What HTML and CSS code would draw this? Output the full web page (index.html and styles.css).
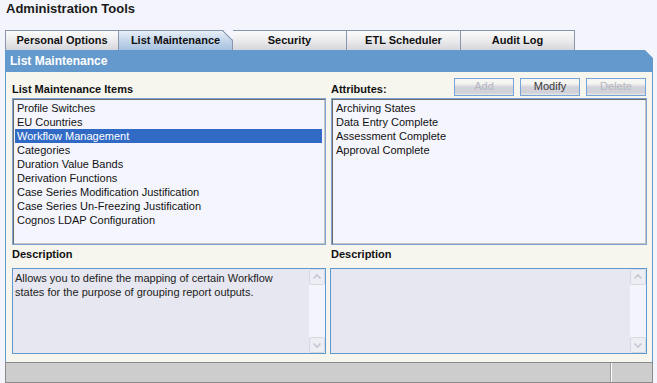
FILE: index.html
```html
<!DOCTYPE html>
<html>
<head>
<meta charset="utf-8">
<title>Administration Tools</title>
<link rel="stylesheet" href="styles.css">
</head>
<body>
<div class="page">
  <h1 class="title">Administration Tools</h1>
  <div class="tabs">
    <div class="tab">Personal Options</div>
    <div class="tab active">List Maintenance</div>
    <div class="tab">Security</div>
    <div class="tab">ETL Scheduler</div>
    <div class="tab">Audit Log</div>
  </div>
  <div class="header">List Maintenance</div>
  <div class="panel">
    <div class="label-row"><span class="label">List Maintenance Items</span></div>
    <div class="label-row">
      <span class="label">Attributes:</span>
      <div class="buttons">
        <div class="btn disabled">Add</div>
        <div class="btn">Modify</div>
        <div class="btn disabled">Delete</div>
      </div>
    </div>
    <div class="listbox">
      <div class="item">Profile Switches</div>
      <div class="item">EU Countries</div>
      <div class="item sel">Workflow Management</div>
      <div class="item">Categories</div>
      <div class="item">Duration Value Bands</div>
      <div class="item">Derivation Functions</div>
      <div class="item">Case Series Modification Justification</div>
      <div class="item">Case Series Un-Freezing Justification</div>
      <div class="item">Cognos LDAP Configuration</div>
    </div>
    <div class="listbox">
      <div class="item">Archiving States</div>
      <div class="item">Data Entry Complete</div>
      <div class="item">Assessment Complete</div>
      <div class="item">Approval Complete</div>
    </div>
    <div class="label desc-label">Description</div>
    <div class="label desc-label">Description</div>
    <div class="textarea">
      <div class="ta-text">Allows you to define the mapping of certain Workflow<br>states for the purpose of grouping report outputs.</div>
      <div class="scroll">
        <div class="sbtn"><svg width="14" height="14" viewBox="0 0 14 14"><path d="M3.5 8.5 L7 5 L10.5 8.5" fill="none" stroke="#c3c7d3" stroke-width="1.6"/></svg></div>
        <div class="sbtn"><svg width="14" height="14" viewBox="0 0 14 14"><path d="M3.5 5.5 L7 9 L10.5 5.5" fill="none" stroke="#c3c7d3" stroke-width="1.6"/></svg></div>
      </div>
    </div>
    <div class="textarea">
      <div class="ta-text"></div>
      <div class="scroll">
        <div class="sbtn"><svg width="14" height="14" viewBox="0 0 14 14"><path d="M3.5 8.5 L7 5 L10.5 8.5" fill="none" stroke="#c3c7d3" stroke-width="1.6"/></svg></div>
        <div class="sbtn"><svg width="14" height="14" viewBox="0 0 14 14"><path d="M3.5 5.5 L7 9 L10.5 5.5" fill="none" stroke="#c3c7d3" stroke-width="1.6"/></svg></div>
      </div>
    </div>
  </div>
  <div class="status">
    <div class="status-main"></div>
    <div class="status-side"></div>
  </div>
</div>
</body>
</html>
```
FILE: styles.css
```css
* { box-sizing: border-box; }
html, body { margin: 0; padding: 0; }
body {
  background: #f4f5fc;
  font-family: "Liberation Sans", Arial, sans-serif;
  font-size: 11px;
  color: #111;
  width: 657px;
  height: 383px;
  overflow: hidden;
}
.page { padding: 0 4px 0 5px; }
.title {
  margin: 0;
  height: 30px;
  line-height: 17px;
  font-size: 13px;
  font-weight: bold;
  padding-left: 1px;
  color: #1a1a1a;
}
.tabs { display: flex; height: 20px; }
.tab {
  position: relative;
  width: 114px;
  height: 20px;
  border-top: 1px solid #8795ad;
  border-right: 1px solid #8795ad;
  background: linear-gradient(#fbfbfb 0%, #eeeef0 45%, #d5d5db 100%);
  font-weight: bold;
  text-align: center;
  line-height: 19px;
  color: #111;
}
.tab:first-child { border-left: 1px solid #8795ad; }
.tab.active {
  background: linear-gradient(#e8eff8 0%, #c4d6ea 50%, #a7c2e0 100%);
  clip-path: polygon(0 0, calc(100% - 10px) 0, 100% 10px, 100% 100%, 0 100%);
}
.tab.active::after {
  content: "";
  position: absolute;
  top: -1px;
  right: -1px;
  width: 11px;
  height: 11px;
  background: linear-gradient(45deg, transparent calc(50% - 1px), #8795ad 50%, transparent calc(50% + 1px));
}
.header {
  height: 22px;
  line-height: 22px;
  background: #6399cc;
  color: #fff;
  font-weight: bold;
  font-size: 12px;
  padding-left: 5px;
  clip-path: polygon(0 0, calc(100% - 8px) 0, 100% 8px, 100% 100%, 0 100%);
}
.panel {
  height: 290px;
  background: #f6f6ef;
  border-left: 1px solid #6399cc;
  border-right: 1px solid #6399cc;
  padding: 6px 6px 8px 6px;
  display: grid;
  grid-template-columns: 314px 316px;
  grid-template-rows: 20px 147px 21px 88px;
  column-gap: 5px;
}
.label-row {
  display: flex;
  justify-content: space-between;
  align-items: flex-start;
}
.label {
  font-weight: bold;
  line-height: 18px;
  margin-top: 2px;
  color: #111;
}
.desc-label { margin-top: 0; height: 19px; line-height: 19px; }
.buttons { display: flex; gap: 6px; margin-right: 1px; }
.btn {
  width: 60px;
  height: 18px;
  border: 1px solid #76a4d8;
  background: linear-gradient(#f6f6f2 0%, #f4f4f0 30%, #d3d3db 50%, #d0d0d8 85%, #e8e8e6 100%);
  line-height: 15px;
  text-align: center;
  color: #3a3a3a;
}
.btn.disabled { color: #b6b6c0; }
.listbox {
  border: 1px solid #7ea3d0;
  box-shadow: inset 1px 1px 0 #6c6c6c, inset -1px -1px 0 #c4c4c4;
  background: #f5f6fd;
  padding: 2px 3px 0 2px;
  overflow: hidden;
}
.item {
  height: 14px;
  line-height: 14px;
  padding-left: 2px;
  white-space: nowrap;
  color: #111;
}
.item.sel { background: #316ac5; color: #fff; }
.textarea {
  margin-top: 2px;
  border: 1px solid #5d98d2;
  background: #e6e7f0;
  display: flex;
}
.textarea + .textarea { margin-left: -1px; }
.ta-text {
  flex: 1;
  padding: 2px 2px;
  line-height: 14px;
  color: #222;
}
.scroll {
  width: 16px;
  background: #f4f5fc;
  display: flex;
  flex-direction: column;
  justify-content: space-between;
}
.sbtn {
  width: 16px;
  height: 16px;
  border: 1px solid #d6d9e3;
  border-radius: 2px;
  background: #eceef4;
  display: flex;
  align-items: center;
  justify-content: center;
}
.status {
  height: 21px;
  border: 1px solid #8a8a8a;
  background: #cdcdcd;
  display: flex;
}
.status-main {
  width: 605px;
  border-right: 1px solid #a0a0a0;
  box-shadow: 1px 0 0 #ffffff;
}
.status-side { flex: 1; }
```
